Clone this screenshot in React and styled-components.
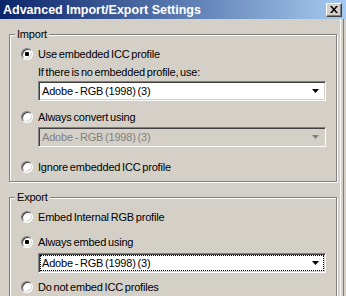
import React from 'react';
import styled, { createGlobalStyle } from 'styled-components';

const GlobalStyle = createGlobalStyle`
  html, body {
    margin: 0;
    padding: 0;
    background: #D4D0C8;
  }
  body {
    font-family: "Liberation Sans", Arial, sans-serif;
    font-size: 11px;
    letter-spacing: -0.2px;
    word-spacing: -1px;
    color: #000;
  }
`;

const Window = styled.div`
  width: 346px;
  height: 296px;
  overflow: hidden;
  background: #D4D0C8;
  display: flex;
  flex-direction: column;
`;

const TitleBar = styled.div`
  height: 19px;
  flex-shrink: 0;
  display: flex;
  align-items: center;
  justify-content: space-between;
  padding: 0 4px 0 3px;
  background: linear-gradient(to right, #0A246A, #A6CAF0);
`;

const Title = styled.span`
  color: #fff;
  font-weight: bold;
  font-size: 12.5px;
  letter-spacing: 0;
  word-spacing: 0;
  white-space: nowrap;
`;

const CloseButton = styled.div`
  box-sizing: border-box;
  width: 16px;
  height: 14px;
  display: flex;
  align-items: center;
  justify-content: center;
  background: #D4D0C8;
  border-top: 1px solid #fff;
  border-left: 1px solid #fff;
  border-right: 1px solid #404040;
  border-bottom: 1px solid #404040;
  box-shadow: inset -1px -1px 0 #808080;
`;

const Body = styled.div`
  flex: 1;
  display: flex;
`;

const Content = styled.div`
  width: 340px;
  box-sizing: border-box;
  padding: 9px 0 0 9px;
`;

const Frame = styled.div`
  flex: 1;
  background: linear-gradient(
    to right,
    #fff 0 1px,
    #D4D0C8 1px 3px,
    #808080 3px 4px,
    #D4D0C8 4px
  );
`;

const Group = styled.fieldset`
  box-sizing: border-box;
  width: 328px;
  margin: ${p => p.$top || 0}px 0 0 0;
  padding: 5px 0 6px 5px;
  border: 1px solid #808080;
  box-shadow: inset 1px 1px 0 #fff, 1px 1px 0 #fff;
  min-inline-size: 0;
`;

const Legend = styled.legend`
  height: 13px;
  line-height: 13px;
  padding: 0 2px;
  background: #D4D0C8;
`;

const Inner = styled.div`
  padding-left: 6px;
  display: flex;
  flex-direction: column;
`;

const Option = styled.label`
  display: flex;
  align-items: center;
  gap: 5px;
  height: 16px;
  margin-top: ${p => p.$top || 0}px;
  white-space: nowrap;
`;

const Radio = styled.span`
  box-sizing: border-box;
  position: relative;
  width: 12px;
  height: 12px;
  flex-shrink: 0;
  border-radius: 50%;
  border: 1px solid;
  border-color: #808080 #fff #fff #808080;
  background: #fff;
  box-shadow: inset 1px 1px 0 #404040, inset -1px -1px 0 #D4D0C8;

  &::after {
    content: '';
    display: ${p => (p.$checked ? 'block' : 'none')};
    position: absolute;
    left: 3px;
    top: 3px;
    width: 4px;
    height: 4px;
    border-radius: 1px;
    background: #000;
  }
`;

const Note = styled.div`
  height: 16px;
  line-height: 16px;
  padding-left: 17px;
  margin-top: ${p => p.$top || 0}px;
  white-space: nowrap;
`;

const Combo = styled.div`
  box-sizing: border-box;
  width: 288px;
  height: 20px;
  margin: ${p => p.$top || 0}px 0 0 17px;
  border: 1px solid;
  border-color: #808080 #fff #fff #808080;
  box-shadow: inset 1px 1px 0 #404040, inset -1px -1px 0 #D4D0C8;
  background: ${p => (p.$disabled ? '#D4D0C8' : '#fff')};
  color: ${p => (p.$disabled ? '#808080' : '#000')};
  padding: 1px;
  display: flex;
`;

const Field = styled.div`
  flex: 1;
  display: flex;
  align-items: center;
  justify-content: space-between;
  padding: 0 4px 0 1px;
  border: 1px dotted ${p => (p.$focused ? '#000' : 'transparent')};
  white-space: nowrap;
`;

const Arrow = ({ color }) => (
  <svg width="7" height="4" viewBox="0 0 7 4">
    <path d="M0 0h7L3.5 4z" fill={color} />
  </svg>
);

const ComboBox = ({ top, disabled, focused }) => (
  <Combo $top={top} $disabled={disabled}>
    <Field $focused={focused}>
      <span>Adobe - RGB (1998) (3)</span>
      <Arrow color={disabled ? '#808080' : '#000'} />
    </Field>
  </Combo>
);

export default function App() {
  return (
    <Window>
      <GlobalStyle />
      <TitleBar>
        <Title>Advanced Import/Export Settings</Title>
        <CloseButton>
          <svg width="8" height="7" viewBox="0 0 8 7">
            <path d="M0 0h2l2 2.5L6 0h2L5 3.5 8 7H6L4 4.5 2 7H0l3-3.5z" fill="#000" />
          </svg>
        </CloseButton>
      </TitleBar>
      <Body>
        <Content>
          <Group>
            <Legend>Import</Legend>
            <Inner>
              <Option><Radio $checked />Use embedded ICC profile</Option>
              <Note $top={2}>If there is no embedded profile, use:</Note>
              <ComboBox top={1} />
              <Option $top={8}><Radio />Always convert using</Option>
              <ComboBox top={2} disabled />
              <Option $top={12}><Radio />Ignore embedded ICC profile</Option>
            </Inner>
          </Group>
          <Group $top={9}>
            <Legend>Export</Legend>
            <Inner>
              <Option><Radio />Embed Internal RGB profile</Option>
              <Option $top={9}><Radio $checked />Always embed using</Option>
              <ComboBox top={3} focused />
              <Option $top={6}><Radio />Do not embed ICC profiles</Option>
            </Inner>
          </Group>
        </Content>
        <Frame />
      </Body>
    </Window>
  );
}
